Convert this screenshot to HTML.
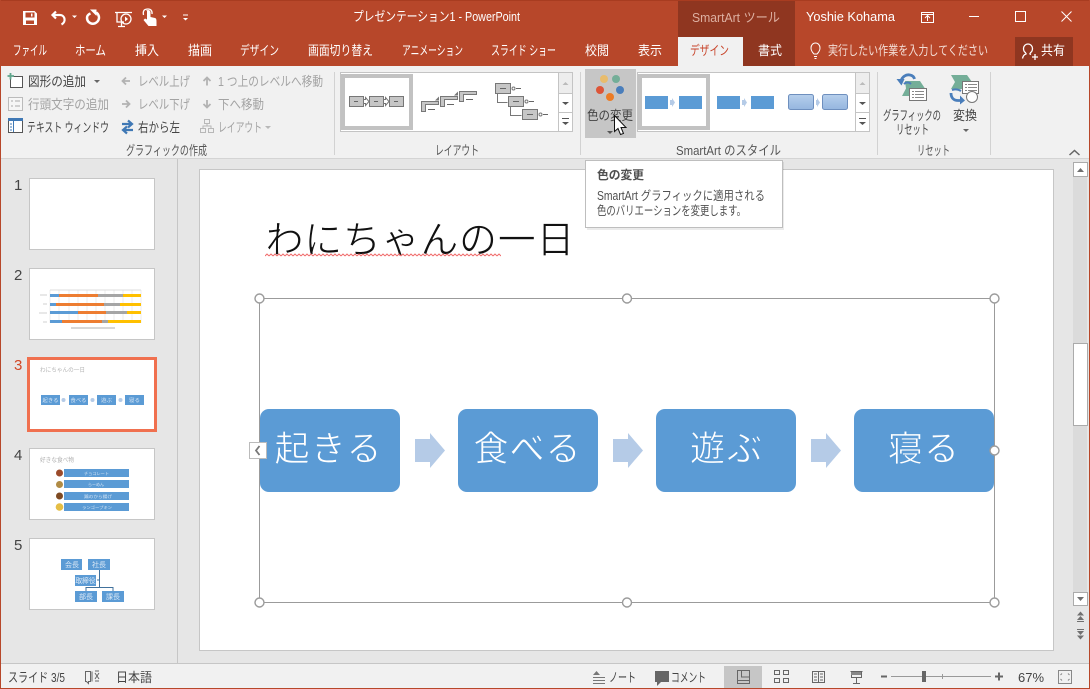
<!DOCTYPE html>
<html lang="ja"><head><meta charset="utf-8"><title>PowerPoint</title>
<style>
html,body{margin:0;padding:0;background:#E6E6E6;width:1090px;height:689px;overflow:hidden}
svg{display:block;position:absolute;left:0;top:0}
text{font-family:"Liberation Sans","Noto Sans CJK JP",sans-serif;font-size:13px;fill:#444}
.w{fill:#fff}.g{fill:#a3a3a3}
.big{font-family:"Noto Sans CJK JP",sans-serif;font-size:35px;fill:#fff;stroke:#5B9BD5;stroke-width:.7px}
</style></head><body>
<svg width="1090" height="689" viewBox="0 0 1090 689" xmlns="http://www.w3.org/2000/svg">
<defs>
<linearGradient id="lg" x1="0" y1="0" x2="0" y2="1"><stop offset="0" stop-color="#B6CFEC"/><stop offset="1" stop-color="#95B6DF"/></linearGradient>
<pattern id="wave" x="265" y="253.500" width="4" height="3" patternUnits="userSpaceOnUse"><path d="M0 2.500L2 .5 4 2.500" fill="none" stroke="#F06A6A" stroke-width="1"/></pattern>
</defs>
<!-- frame -->
<rect width="1090" height="689" fill="#E6E6E6"/>
<rect width="1090" height="67" fill="#B7472A"/>
<rect y="0" width="1090" height="1" fill="#A83C20"/>
<rect x="678" y="1" width="117" height="66" fill="#8F3620"/>
<rect x="1015" y="37" width="58" height="29" fill="#8F3620"/>
<rect x="1" y="66" width="1088" height="92" fill="#F1F1F1"/>
<rect x="743" y="37" width="52" height="29" fill="#8F3620"/>
<rect x="678" y="37" width="65" height="30" fill="#F1F1F1"/>
<rect x="1" y="158" width="1088" height="1" fill="#D4D4D4"/>

<!-- QAT -->
<path d="M23 11h11.500l2.500 2.500V25H23zM25.500 12.500v5h9v-5zM26 20.500v3.500h8v-3.500z" fill="#fff" fill-rule="evenodd"/>
<rect x="31" y="13.500" width="1.500" height="3" fill="#fff"/>
<g fill="none" stroke="#fff">
<path d="M56 11.500l-3.500 3.500 3.500 3.500M53 15h7c5 0 6.500 7 1.500 9.500" stroke-width="2.200"/>
<path d="M90.500 13.500c-3 1-4 3.500-3.200 6.300 1 3.200 4.700 4.700 7.700 3.500 3.500-1.500 5-5.300 3.300-8.500-.5-1-1.200-1.700-2-2.300" stroke-width="2.500"/>
<path d="M115 12.500h17M117 12.500v9.500h7M121.500 22v4M118 26.500h7" stroke-width="1.300"/>
<circle cx="126" cy="19" r="5" stroke-width="1.300"/>
</g>
<path d="M90 9.500h6.500v6.500z" fill="#fff"/>
<path d="M125 16.500l3 2.500-3 2.500z" fill="#fff"/>
<path d="M146 11c1-1.500 4-1.500 4.500 1v5l4.500 1c1.500.5 1.500 2 1.500 4v4h-8l-5-6 1.500-1.500 2 1v-8.500z" fill="#fff"/>
<path d="M143.500 15c-1-5 1.500-6 4.500-6 2.500 0 4.500 1.500 4 5" fill="none" stroke="#fff" stroke-width="1.300"/>
<path d="M72 15.500h5l-2.500 2.500zM162 15.500h5l-2.500 2.500zM183 14.500h5v1h-5zM183 18h5l-2.500 2.500z" fill="#fff"/>

<!-- title bar -->
<text class="w" x="353" y="21" textLength="167" lengthAdjust="spacingAndGlyphs">プレゼンテーション1 - PowerPoint</text>
<text x="692" y="22" textLength="88" lengthAdjust="spacingAndGlyphs" style="fill:#DDB0A2">SmartArt ツール</text>
<text class="w" x="806" y="21" textLength="89" lengthAdjust="spacingAndGlyphs">Yoshie Kohama</text>
<g fill="none" stroke="#fff">
<path d="M921.500 12.500h12v10h-12zM921.500 14.500h12M927.500 21v-5M925 18l2.500-2.500 2.500 2.500"/>
<path d="M969 16.500h10"/>
<rect x="1015.500" y="11.500" width="10" height="10"/>
<path d="M1061.500 11.500l10 10M1071.500 11.500l-10 10"/>
</g>

<!-- tabs -->
<g>
<text class="w" x="13" y="55" textLength="34" lengthAdjust="spacingAndGlyphs">ファイル</text>
<text class="w" x="75" y="55" textLength="31" lengthAdjust="spacingAndGlyphs">ホーム</text>
<text class="w" x="135" y="55" textLength="24" lengthAdjust="spacingAndGlyphs">挿入</text>
<text class="w" x="188" y="55" textLength="24" lengthAdjust="spacingAndGlyphs">描画</text>
<text class="w" x="240" y="55" textLength="39" lengthAdjust="spacingAndGlyphs">デザイン</text>
<text class="w" x="308" y="55" textLength="65" lengthAdjust="spacingAndGlyphs">画面切り替え</text>
<text class="w" x="402" y="55" textLength="61" lengthAdjust="spacingAndGlyphs">アニメーション</text>
<text class="w" x="491" y="55" textLength="65" lengthAdjust="spacingAndGlyphs">スライド ショー</text>
<text class="w" x="585" y="55" textLength="24" lengthAdjust="spacingAndGlyphs">校閲</text>
<text class="w" x="638" y="55" textLength="24" lengthAdjust="spacingAndGlyphs">表示</text>
<text x="690" y="55" textLength="39" lengthAdjust="spacingAndGlyphs" style="fill:#C8442A">デザイン</text>
<text class="w" x="758" y="55" textLength="24" lengthAdjust="spacingAndGlyphs">書式</text>
<text x="828" y="55" textLength="160" lengthAdjust="spacingAndGlyphs" style="fill:#F3DDD5">実行したい作業を入力してください</text>
<text class="w" x="1041" y="55" textLength="24" lengthAdjust="spacingAndGlyphs">共有</text>
</g>
<path d="M814 54c-1-1-3-3-3-6 0-3 2-5 4.500-5s4.500 2 4.500 5c0 3-2 5-3 6zM814 56.500h3M814.500 58.500h2" fill="none" stroke="#fff"/>
<path d="M1026 53c-2-1-2.500-3-2.500-4.500 0-2.500 2-4.500 4.500-4.500s4.500 2 4.500 4.500c0 1.500-.5 3.500-2.500 4.500M1026 53v1c-2 .5-3 2-3.500 4.500M1030 53v1l1 .5" fill="none" stroke="#fff" stroke-width="1.300"/>
<path d="M1035 54v6M1032 57h6" stroke="#fff" stroke-width="1.300"/>

<!-- group: create graphic -->
<path d="M13 76.500h9.500v11h-12V79" fill="#fff" stroke="#555"/>
<path d="M10.500 73v6.500M7.500 76h6.500" stroke="#5FA58C" stroke-width="1.800"/>
<text x="28" y="86" textLength="58" lengthAdjust="spacingAndGlyphs" style="fill:#444">図形の追加</text>
<path d="M94 80h6l-3 3z" fill="#666"/>
<path d="M126 77.500l-3.500 3.500 3.500 3.500M123 81h7" fill="none" stroke="#b2b2b2" stroke-width="1.800"/>
<text class="g" x="138" y="86" textLength="52" lengthAdjust="spacingAndGlyphs">レベル上げ</text>
<path d="M203.500 81l3.500-3.500 3.500 3.500M207 78v7.500" fill="none" stroke="#b2b2b2" stroke-width="1.800"/>
<text class="g" x="218" y="86" textLength="105" lengthAdjust="spacingAndGlyphs">1 つ上のレベルへ移動</text>

<rect x="8.500" y="97.500" width="14" height="13" fill="#F6F6F6" stroke="#bbb"/>
<path d="M11 101h2M11 106h2M15 101h5M15 106h5" stroke="#aaa"/>
<text class="g" x="28" y="109" textLength="81" lengthAdjust="spacingAndGlyphs">行頭文字の追加</text>
<path d="M126 100.500l3.500 3.500-3.500 3.500M122 104h7" fill="none" stroke="#b2b2b2" stroke-width="1.800"/>
<text class="g" x="138" y="109" textLength="52" lengthAdjust="spacingAndGlyphs">レベル下げ</text>
<path d="M203.500 104l3.500 3.500 3.500-3.500M207 100v7.500" fill="none" stroke="#b2b2b2" stroke-width="1.800"/>
<text class="g" x="218" y="109" textLength="46" lengthAdjust="spacingAndGlyphs">下へ移動</text>

<rect x="8.500" y="119.500" width="14" height="13" fill="#fff" stroke="#555"/>
<rect x="8" y="118" width="15" height="3" fill="#3F78B5"/>
<path d="M13.500 121v11M10 124h2M10 127h2M10 130h2" stroke="#3F78B5"/>
<text x="27" y="132" textLength="82" lengthAdjust="spacingAndGlyphs">テキスト ウィンドウ</text>
<path d="M122 124h10M128 120.500l4 3.500-4 3.500M133 130h-10M127 126.500l-4 3.500 4 3.500" fill="none" stroke="#3F78B5" stroke-width="2.200"/>
<text x="138" y="132" textLength="42" lengthAdjust="spacingAndGlyphs">右から左</text>
<path d="M204.500 119.500h5v4h-5zM200.500 128.500h5v4h-5zM208.500 128.500h5v4h-5zM207 123.500v3M203 128v-2h8v2" fill="none" stroke="#b8b8b8"/>
<text class="g" x="218" y="132" textLength="44" lengthAdjust="spacingAndGlyphs">レイアウト</text>
<path d="M265 126h6l-3 3z" fill="#b8b8b8"/>
<text x="126" y="155" textLength="81" lengthAdjust="spacingAndGlyphs" style="fill:#555">グラフィックの作成</text>
<path d="M334.500 72v83M580.500 72v83M877.500 72v83M990.500 72v83" stroke="#D2D2D2"/>

<!-- gallery 1 -->
<rect x="340.500" y="72.500" width="232" height="59" fill="#fff" stroke="#C4C4C4"/>
<rect x="343" y="76" width="68" height="52" fill="#fff" stroke="#C2C2C2" stroke-width="4"/>
<g fill="#C6C6C6" stroke="#777">
<rect x="349.500" y="96.500" width="14" height="10"/><rect x="369.500" y="96.500" width="14" height="10"/><rect x="389.500" y="96.500" width="14" height="10"/>
<path d="M363.500 99.500h2v-2l3.500 4-3.500 4v-2h-2zM383.500 99.500h2v-2l3.500 4-3.500 4v-2h-2z" fill="#fff"/>
</g>
<path d="M354 101.500h4M374 101.500h4M394 101.500h4" stroke="#666"/>
<g fill="#C6C6C6" stroke="#777">
<path d="M421.500 101.500h17v3h-13v7h-4zM440.500 96.500h17v3h-13v7h-4zM459.500 91.500h17v3h-13v7h-4z"/>
</g>
<path d="M435 100.500l4-4v4zM454 95.500l4-4v4z" fill="#777"/>
<path d="M428 109.500h7M447 104.500h7M466 99.500h7" stroke="#666"/>
<g fill="none" stroke="#777">
<path d="M497.500 94v8.500h10M510.500 107v8.500h11"/>
</g>
<g fill="#C6C6C6" stroke="#777">
<rect x="495.500" y="83.500" width="15" height="10"/><rect x="508.500" y="96.500" width="15" height="10"/><rect x="522.500" y="109.500" width="15" height="10"/>
</g>
<path d="M500 88.500h6M513 101.500h6M527 114.500h6M516 88.500h5M529 101.500h5M543 114.500h5" stroke="#666"/>
<circle cx="513.500" cy="88.500" r="1.500" fill="#fff" stroke="#777"/><circle cx="526.500" cy="101.500" r="1.500" fill="#fff" stroke="#777"/><circle cx="540.500" cy="114.500" r="1.500" fill="#fff" stroke="#777"/>
<rect x="559" y="73" width="13" height="20" fill="#EDEDED"/>
<path d="M558.500 72v59M558.500 93.500h14M558.500 112.500h14" stroke="#C4C4C4"/>
<path d="M562.500 85l3-3 3 3z" fill="#bbb"/><path d="M562 102h7l-3.500 3z" fill="#555"/>
<rect x="562" y="118" width="7" height="1" fill="#555"/><path d="M562 122h7l-3.500 3z" fill="#555"/>
<text x="435" y="155" textLength="44" lengthAdjust="spacingAndGlyphs" style="fill:#555">レイアウト</text>

<!-- change colour button -->
<rect x="585" y="69" width="51" height="69" fill="#C6C6C6"/>
<circle cx="604" cy="79" r="4" fill="#E8BC6C"/><circle cx="616" cy="79" r="4" fill="#74AE98"/><circle cx="600" cy="90" r="4" fill="#DD5538"/><circle cx="620" cy="90" r="4" fill="#4A7EBB"/><circle cx="610" cy="97" r="4" fill="#EC7C26"/>
<text x="587" y="120" textLength="46" lengthAdjust="spacingAndGlyphs" style="fill:#444">色の変更</text>
<path d="M607 131h6l-3 3z" fill="#555"/>

<!-- gallery 2 -->
<rect x="637.500" y="72.500" width="232" height="59" fill="#fff" stroke="#C4C4C4"/>
<rect x="640" y="76" width="68" height="52" fill="#fff" stroke="#C2C2C2" stroke-width="4"/>
<g fill="#5B9BD5">
<rect x="645" y="96" width="23" height="13"/><rect x="679" y="96" width="23" height="13"/>
<rect x="717" y="96" width="23" height="13"/><rect x="751" y="96" width="23" height="13"/>
</g>
<path d="M670 100h2v-2l3 4.500-3 4.500v-2h-2zM742 100h2v-2l3 4.500-3 4.500v-2h-2z" fill="#B5CBE7"/>
<rect x="788.500" y="94.500" width="25" height="15" rx="2" fill="url(#lg)" stroke="#6E8FBE"/><rect x="822.500" y="94.500" width="25" height="15" rx="2" fill="url(#lg)" stroke="#6E8FBE"/>
<path d="M816 100h1v-2l3 4.500-3 4.500v-2h-1z" fill="#B5CBE7"/>
<rect x="856" y="73" width="13" height="20" fill="#EDEDED"/>
<path d="M855.500 72v59M855.500 93.500h14M855.500 112.500h14" stroke="#C4C4C4"/>
<path d="M859.500 85l3-3 3 3z" fill="#bbb"/><path d="M859 102h7l-3.500 3z" fill="#555"/>
<rect x="859" y="118" width="7" height="1" fill="#555"/><path d="M859 122h7l-3.500 3z" fill="#555"/>
<text x="676" y="155" textLength="105" lengthAdjust="spacingAndGlyphs" style="fill:#555">SmartArt のスタイル</text>

<!-- reset / convert -->
<path d="M905 81h15l5 7.500-5 7.500h-18l4-7.500z" fill="#74AE98"/>
<rect x="909.500" y="88.500" width="17" height="12" fill="#fff" stroke="#777"/>
<path d="M912 91.500h2M915 91.500h9M912 94.500h2M915 94.500h9M912 97.500h2M915 97.500h9" stroke="#888"/>
<path d="M901 81c1-4 5-7 9-6 2.500.5 4 2 4.500 4" fill="none" stroke="#4A7EBB" stroke-width="2.800"/>
<path d="M896.500 79h8l-3 6.500z" fill="#4A7EBB"/>
<path d="M904 84c2-2 5-2 7 0" fill="none" stroke="#4A7EBB" stroke-width="2"/>
<text x="883" y="120" textLength="58" lengthAdjust="spacingAndGlyphs" style="fill:#444">グラフィックの</text>
<text x="896" y="134" textLength="33" lengthAdjust="spacingAndGlyphs" style="fill:#444">リセット</text>
<path d="M951 75h16l5 7-5 7h-16l4-7z" fill="#74AE98"/>
<rect x="962.500" y="81.500" width="16" height="12" fill="#fff" stroke="#777"/>
<path d="M965 84.500h2M968 84.500h9M965 87.500h2M968 87.500h9M965 90.500h2M968 90.500h9" stroke="#888"/>
<circle cx="972" cy="97" r="5.500" fill="#fff" stroke="#777"/>
<path d="M951 93c0 5 3 7.500 7 7.500h3" fill="none" stroke="#4A7EBB" stroke-width="2.800"/><path d="M960 95.500l5 5-5 4z" fill="#4A7EBB"/>
<path d="M952 90c3-1 6-1 9 1" fill="none" stroke="#4A7EBB" stroke-width="2"/>
<text x="953" y="120" textLength="24" lengthAdjust="spacingAndGlyphs" style="fill:#444">変換</text>
<path d="M963 129h6l-3 3z" fill="#666"/>
<text x="917" y="155" textLength="33" lengthAdjust="spacingAndGlyphs" style="fill:#555">リセット</text>
<path d="M1069.500 155l5-4.500 5 4.500" fill="none" stroke="#666" stroke-width="1.500"/>

<!-- panes -->
<rect x="177" y="159" width="1" height="505" fill="#C6C6C6"/>
<rect x="199.500" y="169.500" width="854" height="481" fill="#fff" stroke="#C6C6C6"/>

<!-- thumbnails -->
<text x="14" y="190" style="font-size:15px;fill:#444">1</text>
<text x="14" y="280" style="font-size:15px;fill:#444">2</text>
<text x="14" y="370" style="font-size:15px;fill:#D24726">3</text>
<text x="14" y="460" style="font-size:15px;fill:#444">4</text>
<text x="14" y="550" style="font-size:15px;fill:#444">5</text>
<g fill="#fff" stroke="#C6C6C6">
<rect x="29.500" y="178.500" width="125" height="71"/>
<rect x="29.500" y="268.500" width="125" height="71"/>
<rect x="29.500" y="448.500" width="125" height="71"/>
<rect x="29.500" y="538.500" width="125" height="71"/>
</g>
<rect x="28.500" y="358.500" width="127" height="72" fill="#fff" stroke="#F0704F" stroke-width="3"/>
<!-- t2 -->
<path d="M50 290v33M59 290v33M69 290v33M78 290v33M87 290v33M96 290v33M105 290v33M114 290v33M123 290v33M132 290v33M141 290v33" stroke="#ECECEC"/>
<path d="M50 290h91" stroke="#DDD"/>
<path d="M40 295h7M43 304h4M39 313h8M43 322h4" stroke="#D0D0D0"/>
<g>
<rect x="50" y="294" width="9" height="3" fill="#5B9BD5"/><rect x="59" y="294" width="39" height="3" fill="#ED7D31"/><rect x="98" y="294" width="25" height="3" fill="#A5A5A5"/><rect x="123" y="294" width="18" height="3" fill="#FFC000"/>
<rect x="50" y="303" width="6" height="3" fill="#5B9BD5"/><rect x="56" y="303" width="48" height="3" fill="#ED7D31"/><rect x="104" y="303" width="16" height="3" fill="#A5A5A5"/><rect x="120" y="303" width="21" height="3" fill="#FFC000"/>
<rect x="50" y="311" width="28" height="3" fill="#5B9BD5"/><rect x="78" y="311" width="28" height="3" fill="#ED7D31"/><rect x="106" y="311" width="21" height="3" fill="#A5A5A5"/><rect x="127" y="311" width="14" height="3" fill="#FFC000"/>
<rect x="50" y="320" width="12" height="3" fill="#5B9BD5"/><rect x="62" y="320" width="40" height="3" fill="#ED7D31"/><rect x="102" y="320" width="6" height="3" fill="#A5A5A5"/><rect x="108" y="320" width="33" height="3" fill="#FFC000"/>
</g>
<rect x="71" y="327" width="44" height="2" fill="#D8D8D8"/>
<!-- t3 -->
<text x="40" y="372" textLength="45" lengthAdjust="spacingAndGlyphs" style="font-size:6px;fill:#B5B5B5">わにちゃんの一日</text>
<g fill="#5B9BD5"><rect x="41" y="395" width="19" height="10"/><rect x="69" y="395" width="19" height="10"/><rect x="97" y="395" width="19" height="10"/><rect x="125" y="395" width="19" height="10"/></g>
<g fill="#B5CBE7"><circle cx="63.500" cy="400" r="2"/><circle cx="92.500" cy="400" r="2"/><circle cx="120.500" cy="400" r="2"/></g>
<text x="42.500" y="402" textLength="16" lengthAdjust="spacingAndGlyphs" style="font-size:5px;fill:#D5E5F5">起きる</text>
<text x="70.500" y="402" textLength="16" lengthAdjust="spacingAndGlyphs" style="font-size:5px;fill:#D5E5F5">食べる</text>
<text x="101" y="402" textLength="11" lengthAdjust="spacingAndGlyphs" style="font-size:5px;fill:#D5E5F5">遊ぶ</text>
<text x="129" y="402" textLength="11" lengthAdjust="spacingAndGlyphs" style="font-size:5px;fill:#D5E5F5">寝る</text>
<!-- t4 -->
<text x="40" y="462" textLength="34" lengthAdjust="spacingAndGlyphs" style="font-size:6px;fill:#B0B0B0">好きな食べ物</text>
<g fill="#5B9BD5"><rect x="64" y="469" width="65" height="8"/><rect x="64" y="480" width="65" height="8"/><rect x="64" y="492" width="65" height="8"/><rect x="64" y="503" width="65" height="8"/></g>
<circle cx="59.500" cy="473" r="3.500" fill="#9B4A2A"/><circle cx="59.500" cy="484.500" r="3.500" fill="#B08B45"/><circle cx="59.500" cy="496" r="3.500" fill="#7E4A22"/><circle cx="59.500" cy="507" r="3.800" fill="#E5BE45"/>
<text x="84" y="475" textLength="25" lengthAdjust="spacingAndGlyphs" style="font-size:4px;fill:#D5E5F5">チョコレート</text>
<text x="88" y="486" textLength="16" lengthAdjust="spacingAndGlyphs" style="font-size:4px;fill:#D5E5F5">らーめん</text>
<text x="84" y="498" textLength="28" lengthAdjust="spacingAndGlyphs" style="font-size:4px;fill:#D5E5F5">鶏のから揚げ</text>
<text x="82" y="509" textLength="30" lengthAdjust="spacingAndGlyphs" style="font-size:4px;fill:#D5E5F5">ランゴープキン</text>
<!-- t5 -->
<path d="M99.500 570v17M86 591v-3.500h27v3.500M97 580h3" fill="none" stroke="#41719C" stroke-width="1"/>
<g fill="#5B9BD5"><rect x="61" y="559" width="21" height="11"/><rect x="88" y="559" width="22" height="11"/><rect x="75" y="575" width="21" height="11"/><rect x="75" y="591" width="22" height="11"/><rect x="102" y="591" width="22" height="11"/></g>
<text x="65" y="567" style="font-size:7px;fill:#DCE9F6">会長</text>
<text x="92" y="567" style="font-size:7px;fill:#DCE9F6">社長</text>
<text x="75.500" y="583" textLength="20" lengthAdjust="spacingAndGlyphs" style="font-size:7px;fill:#DCE9F6">取締役</text>
<text x="79" y="599" style="font-size:7px;fill:#DCE9F6">部長</text>
<text x="106" y="599" style="font-size:7px;fill:#DCE9F6">課長</text>

<!-- slide title -->
<text x="265.500" y="253" textLength="309" style="font-family:'Noto Sans CJK JP',sans-serif;font-size:38px;fill:#111;stroke:#fff;stroke-width:.8px">わにちゃんの一日</text>
<rect x="265" y="253.500" width="236" height="3" fill="url(#wave)"/>

<!-- SmartArt frame -->
<rect x="259.500" y="298.500" width="735" height="304" fill="none" stroke="#9B9B9B"/>
<g fill="#5B9BD5">
<rect x="260" y="409" width="140" height="83" rx="9"/><rect x="458" y="409" width="140" height="83" rx="9"/><rect x="656" y="409" width="140" height="83" rx="9"/><rect x="854" y="409" width="140" height="83" rx="9"/>
</g>
<g fill="#B5CBE7">
<path d="M415 439h15v-6l15 17.500-15 17.500v-6h-15zM613 439h15v-6l15 17.500-15 17.500v-6h-15zM811 439h15v-6l15 17.500-15 17.500v-6h-15z"/>
</g>
<text class="big" x="274.500" y="461" textLength="107">起きる</text>
<text class="big" x="473.500" y="461" textLength="107">食べる</text>
<text class="big" x="690" y="461" textLength="72">遊ぶ</text>
<text class="big" x="888" y="461" textLength="71">寝る</text>
<rect x="249.500" y="442.500" width="17" height="16" fill="#fff" stroke="#BBB"/>
<path d="M259.500 446l-3.500 4.500 3.500 4.500" fill="none" stroke="#777" stroke-width="1.800"/>
<g fill="#fff" stroke="#9B9B9B" stroke-width="1.400">
<circle cx="259.500" cy="298.500" r="4.500"/><circle cx="627" cy="298.500" r="4.500"/><circle cx="994.500" cy="298.500" r="4.500"/>
<circle cx="994.500" cy="450.500" r="4.500"/>
<circle cx="259.500" cy="602.500" r="4.500"/><circle cx="627" cy="602.500" r="4.500"/><circle cx="994.500" cy="602.500" r="4.500"/>
</g>

<!-- tooltip -->
<rect x="587" y="162" width="197" height="68" fill="#000" opacity=".08"/>
<rect x="585.500" y="160.500" width="197" height="67" fill="#fff" stroke="#BEBEBE"/>
<text x="597" y="179" textLength="47" lengthAdjust="spacingAndGlyphs" style="font-size:12px;font-weight:700;fill:#505050">色の変更</text>
<text x="597" y="200" textLength="168" lengthAdjust="spacingAndGlyphs" style="font-size:12.500px;fill:#505050">SmartArt グラフィックに適用される</text>
<text x="597" y="215" textLength="149" lengthAdjust="spacingAndGlyphs" style="font-size:12.500px;fill:#505050">色のバリエーションを変更します。</text>

<!-- cursor -->
<path d="M614.500 115.500v16l3.500-3 2.500 6 3-1-2.500-6h5z" fill="#fff" stroke="#111"/>

<!-- scrollbar -->
<rect x="1073" y="162" width="14" height="444" fill="#DBDBDB"/>
<g fill="#fff" stroke="#ABABAB"><rect x="1073.500" y="162.500" width="14" height="14"/><rect x="1073.500" y="343.500" width="14" height="82"/><rect x="1073.500" y="592.500" width="14" height="13"/></g>
<path d="M1077 172l3.500-4 3.500 4zM1077 597h7l-3.500 4z" fill="#707070"/>
<path d="M1077 615.500l3.500-4 3.500 4zM1077 620l3.500-4 3.500 4zM1077 621h7v1h-7zM1077 629h7v1h-7zM1077 631h7l-3.500 4zM1077 635.500h7l-3.500 4z" fill="#707070"/>

<!-- status bar -->
<rect x="1" y="664" width="1088" height="24" fill="#F1F1F1"/>
<rect x="1" y="663" width="1088" height="1" fill="#C6C6C6"/>
<rect x="724" y="666" width="38" height="22" fill="#C6C6C6"/>
<text x="8" y="682" textLength="57" lengthAdjust="spacingAndGlyphs">スライド 3/5</text>
<path d="M85.500 671.500h5v10h-2v2l-2-2h-1zM92 671.500v10M95 673l4 6M99 673l-4 6M95 671h4M95 681h4" fill="none" stroke="#666"/>
<text x="116" y="682" textLength="36" lengthAdjust="spacingAndGlyphs">日本語</text>
<path d="M593 675l3.500-4 3.500 4z" fill="#777"/><path d="M593 677.500h12M593 680.500h12M593 683.500h12" stroke="#777"/>
<text x="609" y="682" textLength="27" lengthAdjust="spacingAndGlyphs">ノート</text>
<path d="M655 671h14v11h-8l-4 4v-4h-2z" fill="#666"/>
<text x="671" y="682" textLength="35" lengthAdjust="spacingAndGlyphs">コメント</text>
<g fill="none" stroke="#666">
<path d="M737.500 670.500h12v13h-12zM741.500 670.500v6.500h8M737.500 680.500h12"/>
<rect x="774.500" y="670.500" width="5" height="4"/><rect x="783.500" y="670.500" width="5" height="4"/><rect x="774.500" y="678.500" width="5" height="4"/><rect x="783.500" y="678.500" width="5" height="4"/>
<path d="M812.500 671.500h12v11h-12zM818.500 671.500v11M814 674h3M814 677h3M814 680h3M820 674h3M820 677h3M820 680h3"/>
<path d="M850.500 671.500h12M851.500 671.500v6h10v-6M856.500 677.500v6M853 683.500h7"/>
</g>
<rect x="851" y="672" width="10" height="3" fill="#888"/>
<path d="M891 676.500h100M942.500 674v5" stroke="#999"/>
<path d="M881 676.500h6M995 676.500h8M999 672.500v8" stroke="#666" stroke-width="2"/>
<rect x="922" y="671" width="4" height="11" fill="#666"/>
<text x="1018" y="682" textLength="26" lengthAdjust="spacingAndGlyphs">67%</text>
<path d="M1058.500 670.500h13v13h-13zM1062 673.500l-1.500 1.500M1068 673.500l1.500 1.500M1062 680.500l-1.500-1.500M1068 680.500l1.500-1.500" fill="none" stroke="#888"/>

<!-- window edge -->
<rect x="0" y="0" width="1" height="689" fill="#B7472A"/><rect x="1089" y="0" width="1" height="689" fill="#B7472A"/><rect x="0" y="688" width="1090" height="1" fill="#B7472A"/>
</svg>
</body></html>
